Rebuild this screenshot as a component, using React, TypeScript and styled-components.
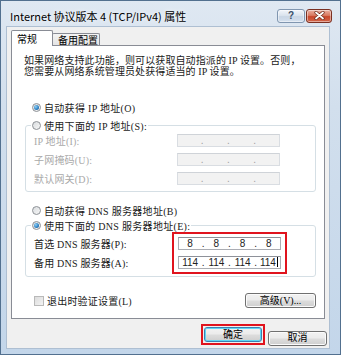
import styled, { createGlobalStyle } from "styled-components";

const UI_FONT = `"Noto Sans CJK SC", "Noto Sans", sans-serif`;
const TEXT_FONT = `"Liberation Serif", "Noto Sans CJK SC", serif`;

const GlobalStyle = createGlobalStyle`
  html, body {
    margin: 0;
    padding: 0;
    background: #ffffff;
  }
  body {
    width: 341px;
    height: 355px;
    overflow: hidden;
  }
  * {
    box-sizing: border-box;
  }
`;

const Window = styled.div`
  width: 341px;
  height: 355px;
  display: flex;
  flex-direction: column;
  padding: 0 10px 5px 5px;
  border: 1px solid #52708f;
  background: linear-gradient(180deg, #dfe8f2 0%, #d2dfed 30%, #c3d6ea 100%);
  font-family: ${UI_FONT};
`;

const TitleBar = styled.div`
  flex: none;
  height: 25px;
  display: flex;
  align-items: center;
  padding: 4px 0 0 4px;
`;

const Title = styled.div`
  flex: 1;
  font-size: 11px;
  color: #000;
  text-shadow: 0 0 5px rgba(255, 255, 255, 0.95);
  white-space: nowrap;
`;

const CaptionButtons = styled.div`
  display: flex;
  gap: 1px;
  margin-right: -2px;
`;

const CaptionButton = styled.div<{ $close?: boolean }>`
  width: ${({ $close }) => ($close ? 26 : 28)}px;
  height: 14px;
  display: flex;
  align-items: center;
  justify-content: center;
  border-radius: 3px;
  border: 1px solid ${({ $close }) => ($close ? "#7a3022" : "#8096b0")};
  background: ${({ $close }) =>
    $close
      ? "linear-gradient(180deg, #eab0a2 0%, #d97a62 45%, #c8472c 55%, #d3664a 100%)"
      : "linear-gradient(180deg, #f1f5fa 0%, #dbe4ee 45%, #c9d6e5 55%, #d4e0ee 100%)"};
  box-shadow: inset 0 0 0 1px rgba(255, 255, 255, 0.45);
  color: #3a4f69;
  font-size: 10px;
  font-weight: bold;
  font-family: "Liberation Sans", sans-serif;
`;

const Client = styled.div`
  flex: 1;
  display: flex;
  flex-direction: column;
  background: #f0f0f0;
  border: 1px solid #aebfd2;
  padding: 3px 4px 0 4px;
`;

const TabRow = styled.div`
  flex: none;
  height: 15px;
  display: flex;
  align-items: flex-end;
`;

const Tab = styled.div<{ $active?: boolean; $width: number }>`
  position: relative;
  z-index: ${({ $active }) => ($active ? 1 : 0)};
  width: ${({ $width }) => $width}px;
  height: ${({ $active }) => ($active ? 16 : 12)}px;
  margin-bottom: ${({ $active }) => ($active ? -1 : 0)}px;
  margin-left: ${({ $active }) => ($active ? 0 : -1)}px;
  display: flex;
  align-items: center;
  padding-left: 5px;
  border: 1px solid #898c95;
  border-bottom: none;
  border-radius: 2px 2px 0 0;
  background: ${({ $active }) =>
    $active ? "#ffffff" : "linear-gradient(180deg, #f4f4f4 0%, #e4e4e4 100%)"};
  font-size: 10px;
  color: #000;
`;

const Panel = styled.div`
  flex: none;
  background: #ffffff;
  border: 1px solid #898c95;
  padding: 9px 0 10px 0;
  display: flex;
  flex-direction: column;
  font-family: ${TEXT_FONT};
  font-size: 10px;
  color: #1a1a1a;
`;

const Description = styled.p`
  margin: 0 0 22px 0;
  padding-left: 12px;
  line-height: 11px;
  letter-spacing: 0.1px;
  white-space: nowrap;
`;

const RadioRow = styled.div<{ $indent?: number; $top?: number }>`
  display: flex;
  align-items: center;
  gap: 3px;
  height: 16px;
  margin-left: ${({ $indent = 0 }) => $indent}px;
  margin-top: ${({ $top = 0 }) => $top}px;
  letter-spacing: 0.3px;
  white-space: nowrap;
`;

const RadioCircle = styled.span<{ $checked?: boolean }>`
  flex: none;
  width: 9px;
  height: 9px;
  border-radius: 50%;
  border: 1px solid #8d9196;
  background: linear-gradient(135deg, #d9dcdf 0%, #f7f7f7 100%);
  display: flex;
  align-items: center;
  justify-content: center;
  &::after {
    content: "";
    width: 5px;
    height: 5px;
    border-radius: 50%;
    background: ${({ $checked }) =>
      $checked ? "radial-gradient(circle at 35% 35%, #8fd0f6 0%, #2b7ec0 60%, #1b4f86 100%)" : "transparent"};
  }
`;

const GroupBox = styled.fieldset<{ $top: number }>`
  margin: ${({ $top }) => $top}px 8px 0 13px;
  padding: 1px 0 6px 0;
  border: 1px solid #d5dfe5;
  border-radius: 3px;
  min-inline-size: 0;
`;

const Legend = styled.legend`
  margin-left: 5px;
  padding: 0 1px;
  background: #ffffff;
`;

const FieldList = styled.div`
  display: flex;
  flex-direction: column;
  gap: 6px;
  padding-left: 8px;
`;

const FieldRow = styled.div`
  display: flex;
  align-items: center;
  height: 13px;
`;

const FieldLabel = styled.span<{ $disabled?: boolean; $width: number }>`
  width: ${({ $width }) => $width}px;
  height: 13px;
  display: flex;
  align-items: center;
  color: ${({ $disabled }) => ($disabled ? "#a9a9a9" : "#1a1a1a")};
  letter-spacing: 0.2px;
  white-space: nowrap;
`;

const IpBox = styled.div<{ $disabled?: boolean }>`
  width: 103px;
  height: 13px;
  display: flex;
  align-items: center;
  border: 1px solid ${({ $disabled }) => ($disabled ? "#d9dde2" : "#abadb3")};
  border-top-color: ${({ $disabled }) => ($disabled ? "#cfd3d8" : "#8e9199")};
  background: ${({ $disabled }) => ($disabled ? "#f2f2f2" : "#ffffff")};
  color: ${({ $disabled }) => ($disabled ? "#a0a0a0" : "#222")};
  font-family: "Liberation Sans", sans-serif;
  font-size: 10px;
`;

const IpPart = styled.span`
  flex: 1;
  text-align: center;
  line-height: 11px;
`;

const IpDot = styled.span`
  width: 4px;
  text-align: center;
  line-height: 11px;
`;

const Caret = styled.span`
  display: inline-block;
  width: 1px;
  height: 10px;
  margin-left: 1px;
  vertical-align: -1px;
  background: #000;
`;

const DnsBody = styled.div`
  display: flex;
  padding-left: 8px;
`;

const LabelColumn = styled.div`
  display: flex;
  flex-direction: column;
  gap: 6px;
  padding-top: 3px;
`;

const RedBox = styled.div<{ $pad: string }>`
  display: flex;
  flex-direction: column;
  gap: 6px;
  border: 2px solid #e0141e;
  padding: ${({ $pad }) => $pad};
`;

const DnsFields = styled(RedBox)`
  margin-top: -2px;
  margin-bottom: -4px;
`;

const BottomRow = styled.div`
  display: flex;
  align-items: center;
  justify-content: space-between;
  height: 15px;
  margin-top: 16px;
  padding: 0 8px 0 22px;
`;

const CheckLabel = styled.div`
  display: flex;
  align-items: center;
  gap: 3px;
  letter-spacing: 0.2px;
  white-space: nowrap;
`;

const CheckBox = styled.span`
  width: 10px;
  height: 10px;
  border: 1px solid #b9b9b9;
  background: linear-gradient(135deg, #dcdcdc 0%, #f3f3f3 100%);
`;

const Button = styled.button<{ $width: number; $default?: boolean }>`
  width: ${({ $width }) => $width}px;
  height: 15px;
  padding: 0;
  border-radius: 3px;
  border: 1px solid ${({ $default }) => ($default ? "#3c7fb1" : "#707070")};
  background: linear-gradient(180deg, #f2f2f2 0%, #ebebeb 48%, #dddddd 52%, #cfcfcf 100%);
  box-shadow: inset 0 0 0 1px ${({ $default }) => ($default ? "#5fd6f5" : "#fbfbfb")};
  font-family: ${TEXT_FONT};
  font-size: 10px;
  color: #000;
  line-height: 12px;
`;

const Footer = styled.div`
  display: flex;
  justify-content: flex-end;
  align-items: flex-start;
  gap: 3px;
  padding-top: 5px;
  margin-right: -2px;
  font-family: ${TEXT_FONT};
`;

const OkFrame = styled(RedBox)`
  margin-top: 0;
`;

const FooterSpacer = styled.div`
  padding-top: 3px;
`;

function IpField({ parts, disabled, caret }: { parts: string[]; disabled?: boolean; caret?: boolean }) {
  return (
    <IpBox $disabled={disabled}>
      {parts.map((p, i) => (
        <span key={i} style={{ display: "contents" }}>
          {i > 0 && <IpDot>.</IpDot>}
          <IpPart>
            {p}
            {caret && i === parts.length - 1 && <Caret />}
          </IpPart>
        </span>
      ))}
    </IpBox>
  );
}

export default function App() {
  const empty = ["", "", "", ""];
  return (
    <>
      <GlobalStyle />
      <Window>
        <TitleBar>
          <Title>Internet 协议版本 4 (TCP/IPv4) 属性</Title>
          <CaptionButtons>
            <CaptionButton>?</CaptionButton>
            <CaptionButton $close>
              <svg width="11" height="9" viewBox="0 0 11 9">
                <path d="M2 1.5 L9 7.5 M9 1.5 L2 7.5" stroke="#6b2a1c" strokeWidth="3.2" strokeLinecap="round" />
                <path d="M2 1.5 L9 7.5 M9 1.5 L2 7.5" stroke="#ffffff" strokeWidth="1.8" strokeLinecap="round" />
              </svg>
            </CaptionButton>
          </CaptionButtons>
        </TitleBar>
        <Client>
          <TabRow>
            <Tab $active $width={42}>常规</Tab>
            <Tab $width={48}>备用配置</Tab>
          </TabRow>
          <Panel>
            <Description>
              如果网络支持此功能，则可以获取自动指派的 IP 设置。否则，
              <br />
              您需要从网络系统管理员处获得适当的 IP 设置。
            </Description>
            <RadioRow $indent={20}>
              <RadioCircle $checked />
              自动获得 IP 地址(O)
            </RadioRow>
            <GroupBox $top={2}>
              <Legend>
                <RadioRow>
                  <RadioCircle />
                  使用下面的 IP 地址(S):
                </RadioRow>
              </Legend>
              <FieldList>
                <FieldRow>
                  <FieldLabel $disabled $width={143}>IP 地址(I):</FieldLabel>
                  <IpField parts={empty} disabled />
                </FieldRow>
                <FieldRow>
                  <FieldLabel $disabled $width={143}>子网掩码(U):</FieldLabel>
                  <IpField parts={empty} disabled />
                </FieldRow>
                <FieldRow>
                  <FieldLabel $disabled $width={143}>默认网关(D):</FieldLabel>
                  <IpField parts={empty} disabled />
                </FieldRow>
              </FieldList>
            </GroupBox>
            <RadioRow $indent={20} $top={10}>
              <RadioCircle />
              自动获得 DNS 服务器地址(B)
            </RadioRow>
            <GroupBox $top={-1}>
              <Legend>
                <RadioRow>
                  <RadioCircle $checked />
                  使用下面的 DNS 服务器地址(E):
                </RadioRow>
              </Legend>
              <DnsBody>
                <LabelColumn>
                  <FieldLabel $width={138}>首选 DNS 服务器(P):</FieldLabel>
                  <FieldLabel $width={138}>备用 DNS 服务器(A):</FieldLabel>
                </LabelColumn>
                <DnsFields $pad="3px 4px">
                  <IpField parts={["8", "8", "8", "8"]} />
                  <IpField parts={["114", "114", "114", "114"]} caret />
                </DnsFields>
              </DnsBody>
            </GroupBox>
            <BottomRow>
              <CheckLabel>
                <CheckBox />
                退出时验证设置(L)
              </CheckLabel>
              <Button $width={71}>高级(V)...</Button>
            </BottomRow>
          </Panel>
          <Footer>
            <OkFrame $pad="1px">
              <Button $width={58} $default>确定</Button>
            </OkFrame>
            <FooterSpacer>
              <Button $width={59}>取消</Button>
            </FooterSpacer>
          </Footer>
        </Client>
      </Window>
    </>
  );
}
